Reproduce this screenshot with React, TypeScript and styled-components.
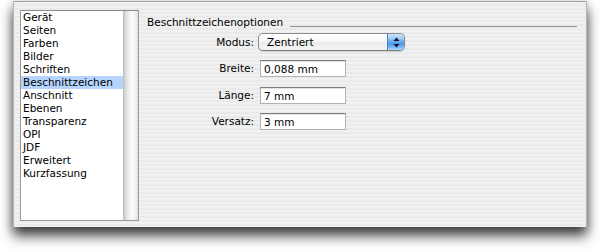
import React from "react";
import styled, { createGlobalStyle } from "styled-components";

const Global = createGlobalStyle`
  html, body { margin: 0; padding: 0; background: #ffffff; }
  body {
    font-family: "Lucida Grande", "DejaVu Sans", sans-serif;
    font-size: 10.5px;
    color: #000;
    -webkit-font-smoothing: antialiased;
  }
  * { box-sizing: border-box; }
`;

const Page = styled.div`
  width: 600px;
  height: 252px;
  padding: 1px 0 0 13px;
  overflow: hidden;
`;

const Window = styled.div`
  width: 574px;
  height: 226px;
  display: flex;
  align-items: flex-start;
  padding: 8px 0 0 6px;
  border: 1px solid #b4b4b4;
  border-top-color: #a2a2a2;
  border-bottom: none;
  background: repeating-linear-gradient(
    to bottom,
    #f1f1f1 0px,
    #f1f1f1 2px,
    #eaeaea 2px,
    #eaeaea 4px
  );
  box-shadow: 0 9px 12px rgba(0, 0, 0, 0.72), 0 2px 8px rgba(0, 0, 0, 0.22);
`;

const ScrollView = styled.div`
  width: 119px;
  height: 211px;
  display: flex;
  border: 1px solid #9a9a9a;
  border-top-color: #8a8a8a;
  flex-shrink: 0;
`;

const List = styled.ul`
  list-style: none;
  margin: 0;
  padding: 0;
  width: 102px;
  height: 100%;
  background: #ffffff;
`;

const Item = styled.li<{ $selected?: boolean }>`
  height: 13px;
  line-height: 13px;
  padding-left: 2px;
  white-space: nowrap;
  background: ${(p) => (p.$selected ? "#b5d5fe" : "transparent")};
`;

const Track = styled.div`
  width: 15px;
  height: 100%;
  background: linear-gradient(
    to right,
    #b9b9b9 0%,
    #d6d6d6 14%,
    #ececec 34%,
    #fbfbfb 60%,
    #f2f2f2 82%,
    #dcdcdc 100%
  );
`;

const Panel = styled.div`
  flex: 1;
  display: flex;
  flex-direction: column;
  padding: 6px 9px 0 8px;
`;

const GroupHeader = styled.div`
  display: flex;
  align-items: flex-start;
  height: 13px;
`;

const GroupTitle = styled.span`
  line-height: 13px;
  white-space: nowrap;
`;

const GroupRule = styled.div`
  flex: 1;
  height: 1px;
  margin: 10px 0 0 7px;
  background: #8e8e8e;
`;

const FormRow = styled.div<{ $mt: number; $h: number }>`
  display: flex;
  align-items: center;
  gap: 6px;
  margin-top: ${(p) => p.$mt}px;
  height: ${(p) => p.$h}px;
`;

const Label = styled.label`
  width: 107px;
  text-align: right;
  line-height: 13px;
  white-space: nowrap;
`;

const Popup = styled.div`
  position: relative;
  width: 147px;
  height: 18px;
  margin-left: -2px;
  display: flex;
  align-items: center;
  border: 1px solid #8c8c8c;
  border-bottom-color: #7a7a7a;
  border-radius: 5px;
  overflow: hidden;
  background: linear-gradient(
    to bottom,
    #ffffff 0%,
    #f7f7f7 45%,
    #ececec 55%,
    #f5f5f5 100%
  );
  box-shadow: 0 1px 1px rgba(0, 0, 0, 0.12);
`;

const PopupText = styled.span`
  flex: 1;
  padding-left: 8px;
  line-height: 13px;
  white-space: nowrap;
`;

const PopupArrows = styled.div`
  width: 17px;
  height: 100%;
  display: flex;
  align-items: center;
  justify-content: center;
  border-left: 1px solid #4a7fc0;
  background: linear-gradient(
    to bottom,
    #cfe4fa 0%,
    #9ccaf4 30%,
    #5ea6ec 50%,
    #4c9ae9 62%,
    #7dbcf6 85%,
    #b6dcfd 100%
  );
`;

const Field = styled.input`
  width: 86px;
  height: 17px;
  margin: 0;
  padding: 0 0 0 3px;
  font: inherit;
  color: #000;
  background: #ffffff;
  border: 1px solid #b2b2b2;
  border-top-color: #7c7c7c;
  box-shadow: inset 0 1px 0 #e2e2e2;
  outline: none;
`;

const items = [
  "Gerät",
  "Seiten",
  "Farben",
  "Bilder",
  "Schriften",
  "Beschnittzeichen",
  "Anschnitt",
  "Ebenen",
  "Transparenz",
  "OPI",
  "JDF",
  "Erweitert",
  "Kurzfassung",
];

const fields = [
  { label: "Breite:", value: "0,088 mm", mt: 9 },
  { label: "Länge:", value: "7 mm", mt: 10 },
  { label: "Versatz:", value: "3 mm", mt: 9 },
];

export default function App() {
  return (
    <>
      <Global />
      <Page>
        <Window>
          <ScrollView>
            <List>
              {items.map((it) => (
                <Item key={it} $selected={it === "Beschnittzeichen"}>
                  {it}
                </Item>
              ))}
            </List>
            <Track />
          </ScrollView>
          <Panel>
            <GroupHeader>
              <GroupTitle>Beschnittzeichenoptionen</GroupTitle>
              <GroupRule />
            </GroupHeader>
            <FormRow $mt={4} $h={18}>
              <Label>Modus:</Label>
              <Popup>
                <PopupText>Zentriert</PopupText>
                <PopupArrows>
                  <svg width="7" height="11" viewBox="0 0 7 11">
                    <path d="M3.5 0.5 L6.5 4 L0.5 4 Z" fill="#101030" />
                    <path d="M0.5 7 L6.5 7 L3.5 10.5 Z" fill="#101030" />
                  </svg>
                </PopupArrows>
              </Popup>
            </FormRow>
            {fields.map((f) => (
              <FormRow key={f.label} $mt={f.mt} $h={17}>
                <Label>{f.label}</Label>
                <Field readOnly defaultValue={f.value} />
              </FormRow>
            ))}
          </Panel>
        </Window>
      </Page>
    </>
  );
}
